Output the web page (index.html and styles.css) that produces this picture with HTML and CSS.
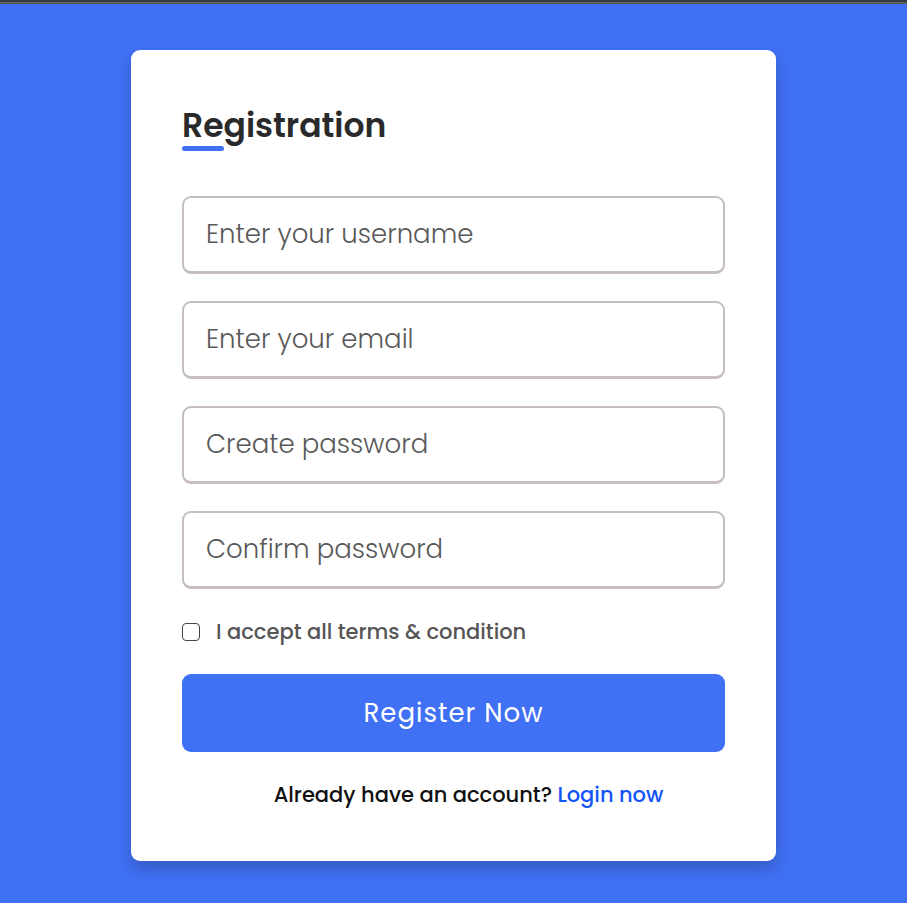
FILE: index.html
```html
<!DOCTYPE html>
<html lang="en">
<head>
<meta charset="utf-8">
<meta name="viewport" content="width=device-width, initial-scale=1">
<title>Registration</title>
<link rel="stylesheet" href="styles.css">
</head>
<body>
<main class="wrapper">
  <h1 class="title">Registration</h1>
  <form class="form">
    <input class="field" type="text" placeholder="Enter your username" aria-label="Username">
    <input class="field" type="email" placeholder="Enter your email" aria-label="Email">
    <input class="field" type="password" placeholder="Create password" aria-label="Create password">
    <input class="field" type="password" placeholder="Confirm password" aria-label="Confirm password">
    <div class="policy">
      <input class="check" type="checkbox" id="terms">
      <label for="terms">I accept all terms &amp; condition</label>
    </div>
    <button class="submit" type="submit">Register Now</button>
    <p class="login">Already have an account? <a href="#">Login now</a></p>
  </form>
</main>
</body>
</html>
```
FILE: styles.css
```css
* {
  box-sizing: border-box;
  margin: 0;
  padding: 0;
}

body {
  min-height: 100vh;
  padding: 48px 16px 42px;
  border-top: 2px solid #35393e;
  background: #4070f4;
  box-shadow: inset 0 1px #66676b, inset 0 2px #59584a;
  font-family: Poppins, Inter, sans-serif;
}

.wrapper {
  width: 100%;
  max-width: 645px;
  margin: 0 auto;
  padding: 51px;
  border-radius: 9px;
  background: #fff;
  box-shadow: 0 8px 16px rgba(0, 0, 0, 0.2);
}

.title {
  position: relative;
  color: #2a2a2a;
  font-size: 33px;
  font-weight: 600;
  line-height: 50px;
}

.title::before {
  content: "";
  position: absolute;
  left: 0;
  bottom: 0;
  width: 42px;
  height: 5px;
  border-radius: 12px;
  background: #4070f4;
}

.form {
  display: flex;
  flex-direction: column;
  gap: 27px;
  margin-top: 45px;
}

.field {
  width: 100%;
  height: 78px;
  padding: 0 22px;
  border: 2px solid #c7bebe;
  border-bottom-width: 3px;
  border-radius: 9px;
  background: #fff;
  color: #333;
  font-family: inherit;
  font-size: 26px;
  outline: none;
}

.field::placeholder {
  color: #595959;
  font-weight: 300;
  opacity: 1;
}

.field:focus {
  border-color: #4070f4;
}

.policy {
  display: flex;
  align-items: center;
  gap: 16px;
  line-height: 31px;
  color: #555;
  font-size: 21px;
  font-weight: 500;
}

.check {
  appearance: none;
  width: 18px;
  height: 18px;
  border: 1px solid #444;
  border-radius: 4px;
  background: #fff;
}

.check:checked {
  background: #4070f4;
}

.submit {
  width: 100%;
  height: 78px;
  border: 0;
  border-radius: 9px;
  background: #4070f4;
  color: #fff;
  font-family: inherit;
  font-size: 26px;
  letter-spacing: 1px;
  cursor: pointer;
}

.login {
  padding-left: 30px;
  color: #111;
  font-size: 21px;
  font-weight: 500;
  line-height: 31px;
  text-align: center;
}

.login a {
  color: #1455f5;
  text-decoration: none;
}
```
